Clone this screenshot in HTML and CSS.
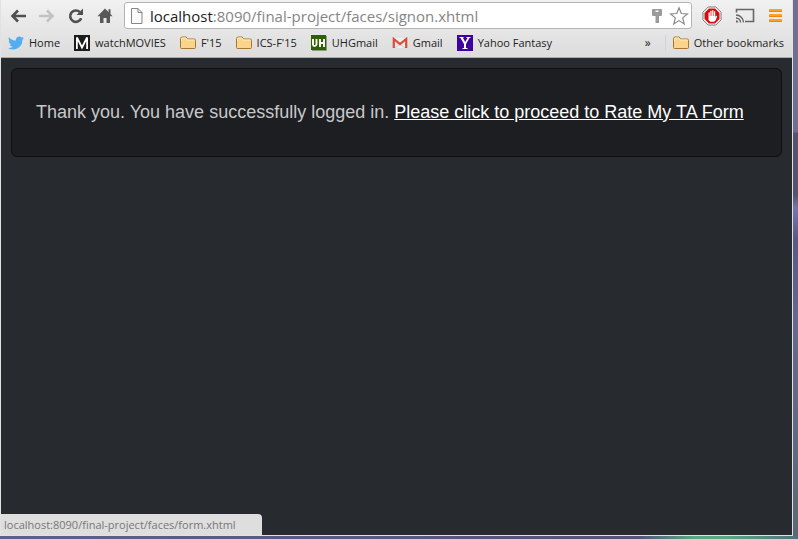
FILE: index.html
```html
<!DOCTYPE html>
<html lang="en">
<head>
<meta charset="utf-8">
<title>Sign on</title>
<link rel="stylesheet" href="styles.css">
</head>
<body>
<div class="window">
  <header class="chrome">
    <div class="toolbar">
      <div class="group">
        <button aria-label="Back"><svg width="18" height="18" viewBox="0 0 18 18"><path d="M17 9H4M9 3.500 3.500 9 9 14.500" fill="none" stroke="#505050" stroke-width="2.600"/></svg></button>
        <button aria-label="Forward"><svg width="18" height="18" viewBox="0 0 18 18"><path d="M1 9h13M9 3.500 14.500 9 9 14.500" fill="none" stroke="#c2c2c2" stroke-width="2.600"/></svg></button>
        <button aria-label="Reload"><svg width="18" height="18" viewBox="0 0 18 18"><path d="M14.200 11.200A5.700 5.700 0 1 1 13 5.200" fill="none" stroke="#505050" stroke-width="2.600"/><path d="M16 1.500V8H9.500z" fill="#505050"/></svg></button>
        <button aria-label="Home page"><svg width="18" height="18" viewBox="0 0 18 18"><path d="M9 1.500 1.500 9.200H4V16h3.500v-5h3v5H14V9.200h2.500L14.500 7V2.200h-2v2.700z" fill="#585858"/></svg></button>
      </div>
      <div class="omnibox">
        <svg width="14" height="18" viewBox="0 0 14 18"><path d="M1.500 1.500h6.500l4 4V16.500H1.500z" fill="#fafafa" stroke="#858585"/><path d="M8 1.500v4h4" fill="none" stroke="#858585"/></svg>
        <a class="url" href="#"><span class="host">localhost</span>:8090/final-project/faces/signon.xhtml</a>
        <button aria-label="Saved password"><svg width="12" height="16" viewBox="0 0 12 16"><path fill-rule="evenodd" d="M2 1h8q1 0 1 1v5q0 1-1 1H8v7H4.500V8H2Q1 8 1 7V2q0-1 1-1zM4.500 2.500V4h3V2.500z" fill="#9b9b9b"/></svg></button>
        <button aria-label="Bookmark this page"><svg width="20" height="20" viewBox="0 0 20 20"><path d="m10 1.800 2.300 5.700 6.100.5-4.700 3.900 1.500 6L10 14.600l-5.200 3.300 1.500-6L1.600 8l6.100-.5z" fill="#fff" stroke="#8a8a8a" stroke-width="1.200"/></svg></button>
      </div>
      <div class="group extensions">
        <button aria-label="AdBlock"><svg width="20" height="20" viewBox="0 0 20 20"><path d="M6.200 1h7.600L19 6.200v7.600L13.800 19H6.200L1 13.800V6.200z" fill="#fff" stroke="#777"/><path d="M6.900 2.500h6.200l4.400 4.400v6.200l-4.400 4.400H6.900l-4.400-4.400V6.900z" fill="#d60c0c"/><path d="M6.500 6.500h1.300V10h.5V4.800h1.300V10h.5V4.200h1.300V10h.5V5.200h1.300V11l1-1.500 1 .8-1.600 4.200-1.500 1.300H8.300l-1.800-1.700z" fill="#fff"/></svg></button>
        <button aria-label="Cast"><svg width="20" height="18" viewBox="0 0 20 18"><path d="M1.500 5.500v-3h17v12H10" fill="none" stroke="#666" stroke-width="1.600"/><path d="M1 8a7.500 7.500 0 0 1 7.500 7.500M1 11a4.500 4.500 0 0 1 4.500 4.500" fill="none" stroke="#666" stroke-width="1.400"/><path d="M1 13.200a2.300 2.300 0 0 1 2.300 2.300H1z" fill="#666"/></svg></button>
        <button aria-label="Menu"><svg width="14" height="14" viewBox="0 0 14 14"><path d="M1 0h13v3H1zM1 5h13v3H1zM1 10h13v3H1z" fill="#fba02a"/><path d="M1 2.500h13M1 7.500h13M1 12.500h13" stroke="#ee8510"/></svg></button>
      </div>
    </div>
    <nav class="bookmarks" aria-label="Bookmarks">
      <a href="#"><svg width="16" height="16" viewBox="0 0 24 24"><path d="M24 4.600c-.9.400-1.800.7-2.800.8 1-.6 1.800-1.600 2.200-2.700-1 .6-2 1-3.100 1.200a4.900 4.900 0 0 0-8.400 4.500C7.700 8.200 4.100 6.300 1.700 3.200.4 5.400 1 8.300 3.200 9.700c-.8 0-1.600-.2-2.200-.6 0 2.300 1.600 4.400 3.900 4.900-.7.200-1.500.2-2.200.1.600 2 2.400 3.400 4.600 3.400A9.900 9.900 0 0 1 0 19.500a14 14 0 0 0 21.500-12.400c1-.7 1.800-1.600 2.500-2.500z" fill="#55acee"/></svg>Home</a>
      <a href="#"><svg width="16" height="16" viewBox="0 0 16 16"><path d="M0 0h16v16H0z" fill="#1c1c1c"/><path d="M2.900 14V2.500L8 12.500l5.100-10V14" fill="none" stroke="#fff" stroke-width="1.800"/></svg>watchMOVIES</a>
      <a href="#"><svg width="16" height="16" viewBox="0 0 16 16"><path d="M.5 12.500v-9l1-1.500h4.700l1.300 2h6.700q1.300 0 1.300 1.300v7.200q0 1-1 1H1.500q-1 0-1-1z" fill="#fad48b" stroke="#a97430"/><path d="M1.500 6V4L2 3h3.800L7 5h7.500" fill="none" stroke="#fff0c5"/></svg>F'15</a>
      <a href="#"><svg width="16" height="16" viewBox="0 0 16 16"><path d="M.5 12.500v-9l1-1.500h4.700l1.300 2h6.700q1.300 0 1.300 1.300v7.200q0 1-1 1H1.500q-1 0-1-1z" fill="#fad48b" stroke="#a97430"/><path d="M1.500 6V4L2 3h3.800L7 5h7.500" fill="none" stroke="#fff0c5"/></svg>ICS-F'15</a>
      <a href="#"><svg width="16" height="16" viewBox="0 0 16 16"><path d="M0 0h15v15H0z" fill="#2e6000"/><path d="M15.500 1v14.500H1" fill="none" stroke="#929b8b"/><path d="M2 4v5.500q0 1.500 1.500 1.500t2-1.500V4M9 4v8M13 4v8M9 8h4" fill="none" stroke="#fff" stroke-width="1.900"/></svg>UHGmail</a>
      <a href="#"><svg width="16" height="16" viewBox="0 0 16 16"><path d="M2 3h12v10H2z" fill="#eee"/><path d="M3 13l5-4 5 4" fill="none" stroke="#ccc"/><path d="M1.800 13V4L8 9l6.200-5v9" fill="none" stroke="#d94b3d" stroke-width="2.200"/></svg>Gmail</a>
      <a href="#"><svg width="16" height="16" viewBox="0 0 16 16"><path d="M0 0h16v16H0z" fill="#4000a0"/><path d="M2.500 2h4v1H6l2.200 4L10.500 3h-1V2h4v1h-1L9 9v4h1.500v1h-5v-1H7V9L3.500 3h-1z" fill="#fff"/></svg>Yahoo Fantasy</a>
      <button class="more" aria-label="More bookmarks">»</button>
      <a class="other" href="#"><svg width="16" height="16" viewBox="0 0 16 16"><path d="M.5 12.500v-9l1-1.500h4.700l1.300 2h6.700q1.300 0 1.300 1.300v7.200q0 1-1 1H1.500q-1 0-1-1z" fill="#fad48b" stroke="#a97430"/><path d="M1.500 6V4L2 3h3.800L7 5h7.500" fill="none" stroke="#fff0c5"/></svg>Other bookmarks</a>
    </nav>
  </header>
  <main class="page">
    <p class="well">Thank you. You have successfully logged in. <a href="#">Please click to proceed to Rate My TA Form</a></p>
    <div class="status">localhost:8090/final-project/faces/form.xhtml</div>
  </main>
</div>
</body>
</html>
```
FILE: styles.css
```css
* { box-sizing: border-box; }
body {
  margin: 0;
  height: 100vh;
  padding: 0 5px 3px 0;
  overflow: hidden;
  background:
    linear-gradient(90deg, #605f8b 0, #56527a 70%, #56527a 80%, #58a883 87%, #58a883 91%, #53727a 100%) bottom / 100% 3px no-repeat,
    linear-gradient(#716e91 0, #716e91 132px, #57536f 133px, #57536f 195px, #7775ad 208px, #5b5887 240px, #66698f 60%, #596b76 100%);
}
svg { display: block; flex: none; }
button { border: 0; padding: 0; background: none; font: inherit; color: inherit; }
a { color: inherit; text-decoration: none; }
.window {
  display: flex;
  flex-direction: column;
  height: 100%;
  border: 1px solid #e2e2e2;
  border-top: 0;
}
.chrome {
  background: linear-gradient(#f1f1f1, #dcdcdc);
  border-bottom: 1px solid #aaa;
  font-family: "Open Sans", "Noto Sans", sans-serif;
  color: #222;
}
.toolbar {
  display: flex;
  align-items: center;
  gap: 10px;
  height: 29px;
  padding: 2px 10px 0 8px;
}
.group { display: flex; align-items: center; gap: 11px; }
.extensions { gap: 13px; }
.omnibox {
  flex: 1;
  min-width: 0;
  display: flex;
  align-items: center;
  gap: 6px;
  height: 27px;
  padding: 0 2px 0 5px;
  border: 1px solid #b4b4b4;
  border-radius: 3px;
  background: #fff;
}
.url {
  flex: 1;
  min-width: 0;
  overflow: hidden;
  white-space: nowrap;
  font-size: 15px;
  line-height: 22px;
  color: #858585;
}
.host { color: #222; }
.bookmarks {
  display: flex;
  align-items: center;
  gap: 14px;
  height: 28px;
  padding: 0 8px 0 7px;
  font-size: 11px;
  line-height: 16px;
  white-space: nowrap;
}
.bookmarks a { display: flex; align-items: center; gap: 5px; }
.more { margin-left: auto; font-size: 12px; }
.bookmarks .other { padding-left: 7px; border-left: 1px solid #cbd4db; }
.page {
  position: relative;
  flex: 1;
  padding: 10px;
  background: #272b30;
}
.well {
  margin: 0;
  padding: 30px 24px;
  border: 1px solid #0d0e10;
  border-radius: 6px;
  background: #1c1e22;
  color: #c8c8c8;
  font: 18px/27px "Liberation Sans", Arial, sans-serif;
}
.well a { color: #fff; text-decoration: underline; }
.status {
  position: absolute;
  left: 0;
  bottom: 0;
  padding: 2px 26px 2px 3px;
  border-radius: 0 4px 0 0;
  background: #dedede;
  color: #777;
  font: 11px/17px "Open Sans", "Noto Sans", sans-serif;
}
```
